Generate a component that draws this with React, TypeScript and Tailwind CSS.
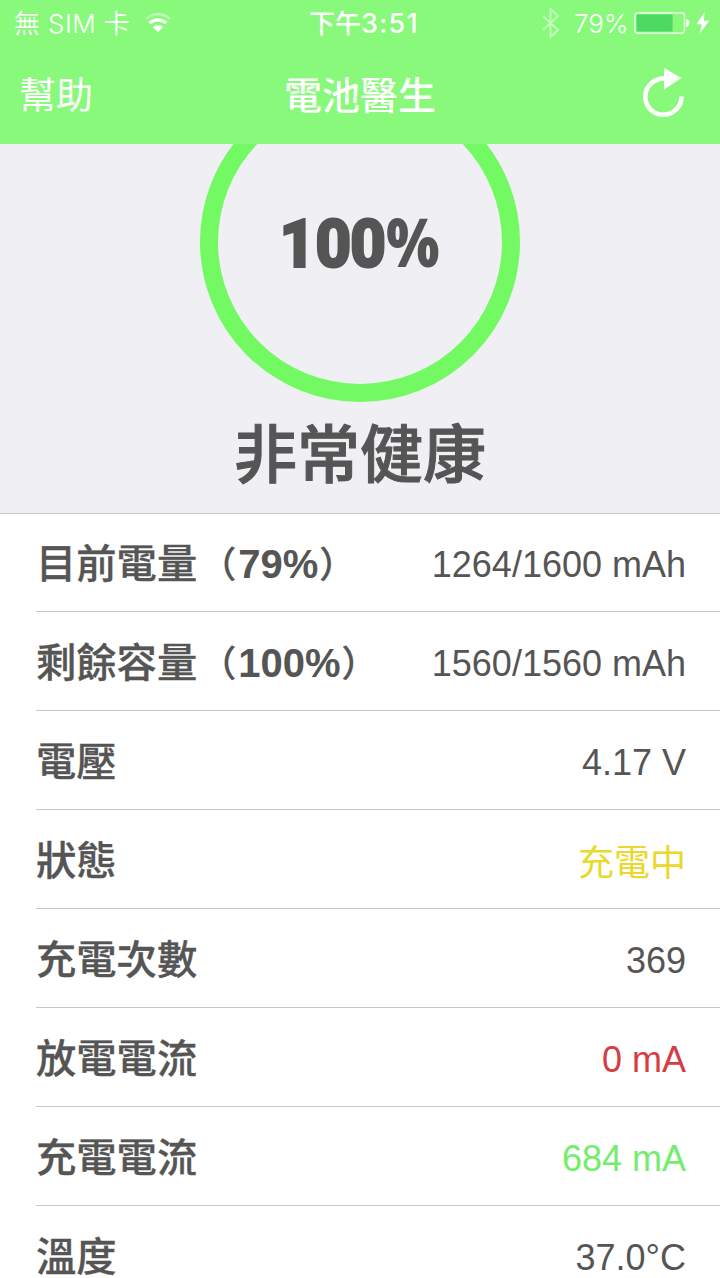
interface BatteryItem {
  label: string;
  percent?: string;
  value: string;
  color?: string;
}

const batteryItems: BatteryItem[] = [
  { label: "目前電量", percent: "79%", value: "1264/1600 mAh" },
  { label: "剩餘容量", percent: "100%", value: "1560/1560 mAh" },
  { label: "電壓", value: "4.17 V" },
  { label: "狀態", value: "充電中", color: "text-[#e8d92b] pt-[5px]" },
  { label: "充電次數", value: "369" },
  { label: "放電電流", value: "0 mA", color: "text-[#d63c44]" },
  { label: "充電電流", value: "684 mA", color: "text-[#73ee6c]" },
  { label: "溫度", value: "37.0°C" },
];

const WifiIcon = () => (
  <svg className="-mt-px ml-[15px]" width="26" height="21" viewBox="0 0 28 22" fill="none">
    <path d="M1.2 7.2a18.2 18.2 0 0 1 25.6 0" stroke="#fff" strokeOpacity="0.4" strokeWidth="2.8" />
    <path d="M5 11.8a12.8 12.8 0 0 1 18 0" stroke="#fff" strokeWidth="3.4" />
    <path d="M14 21.4 8.6 16a7.6 7.6 0 0 1 10.8 0Z" fill="#fff" />
  </svg>
);

const BluetoothIcon = () => (
  <svg width="18" height="30" viewBox="0 0 18 30" fill="none">
    <path d="M1 8l15 14-7.5 7V1L16 8 1 22" stroke="#fff" strokeOpacity="0.5" strokeWidth="1.9" />
  </svg>
);

const BatteryIcon = () => (
  <svg width="56" height="22" viewBox="0 0 56 22" fill="none">
    <rect x="0.9" y="0.9" width="49.6" height="20.2" rx="3" stroke="#fff" strokeOpacity="0.75" strokeWidth="1.6" />
    <rect x="2.6" y="2.6" width="36" height="16.8" rx="1" fill="#4cd964" />
    <path d="M52.2 7c2 .3 3.2 2 3.2 4s-1.2 3.7-3.2 4Z" fill="#fff" />
  </svg>
);

const BoltIcon = () => (
  <svg className="ml-[6px]" width="14" height="22" viewBox="0 0 14 22">
    <path d="M8.6 0 .5 12.2h5L3.8 21.5 13.2 8.7H7.8Z" fill="#fff" />
  </svg>
);

const RefreshIcon = () => (
  <svg className="-mt-1" width="42" height="50" viewBox="0 0 42 50" fill="none">
    <path d="M38.5 28.5A18.1 18.1 0 1 1 21 10.6" stroke="#fff" strokeWidth="4.6" />
    <path d="M21 0v21.5L38.5 10Z" fill="#fff" />
  </svg>
);

const StatusBar = () => (
  <div className="relative flex h-[46px] items-center justify-between pl-[14px] pr-[10px] text-[26px] leading-none">
    <div className="flex items-center font-[350]">
      <span className="whitespace-nowrap pt-0.5 tracking-[0.4px]">無 SIM 卡</span>
      <WifiIcon />
    </div>
    <span className="absolute left-[309px] whitespace-nowrap pt-px font-medium">
      下午<span className="text-[27px] tracking-[1.2px]">3:51</span>
    </span>
    <div className="flex items-center">
      <BluetoothIcon />
      <span className="ml-[14px] mr-[6px] w-[54px] whitespace-nowrap pt-0.5 font-[350]">79%</span>
      <BatteryIcon />
      <BoltIcon />
    </div>
  </div>
);

const NavBar = () => (
  <div className="grid h-[98px] grid-cols-[1fr_auto_1fr] items-center px-[19px]">
    <span className="text-[37px] font-normal leading-none">幫助</span>
    <h1 className="text-center text-[38px] font-medium leading-none">電池醫生</h1>
    <div className="flex justify-end pr-4">
      <RefreshIcon />
    </div>
  </div>
);

const Percent = ({ children }: { children: string }) => (
  <>
    <span className="ml-[3px] text-[36px]">（</span>
    <span className="ml-[2px] text-[40px] font-bold [-webkit-text-stroke:0px]">{children}</span>
    <span className="ml-px text-[36px]">）</span>
  </>
);

const ListItem = ({ label, percent, value, color }: BatteryItem) => (
  <li className="ml-9 flex h-[99px] items-center justify-between border-b border-[#c8c7cc] pr-[34px] pt-[5px] first:h-[98px] first:pt-1">
    <span className="whitespace-nowrap text-[40.3px] font-medium leading-9 [-webkit-text-stroke:0.3px_#555]">
      {label}
      {percent && <Percent>{percent}</Percent>}
    </span>
    <span className={`whitespace-nowrap text-[36px] leading-none ${color ?? ""}`}>{value}</span>
  </li>
);

function App() {
  return (
    <div className="h-[1278px] overflow-hidden bg-white text-[#555] font-['Liberation_Sans','Noto_Sans_CJK_TC',sans-serif]">
      <header className="h-36 bg-[#88f97a] text-white font-['Inter','Noto_Sans_CJK_TC',sans-serif]">
        <StatusBar />
        <NavBar />
      </header>
      <section className="flex h-[370px] flex-col items-center overflow-hidden border-b border-[#c8c7cc] bg-[#efeff4]">
        <div className="mt-[-62px] flex size-80 shrink-0 items-center justify-center rounded-full border-[18px] border-[#73f962]">
          <div className="ml-1 mt-0.5 scale-x-[0.93] whitespace-nowrap text-[67px] leading-[67px]">
            <span className="font-['Roboto'] font-black [-webkit-text-stroke:2px_#555]">
              1<span className="tracking-[-1.5px]">00</span>
            </span>
            <span className="ml-px inline-block origin-left scale-x-[0.9] font-['Open_Sans'] font-extrabold">%</span>
          </div>
        </div>
        <p className="mt-[22px] text-[63px] font-medium leading-none [-webkit-text-stroke:1px_#555]">非常健康</p>
      </section>
      <ul>
        {batteryItems.map((item) => (
          <ListItem key={item.label} {...item} />
        ))}
      </ul>
    </div>
  );
}

export default App;
